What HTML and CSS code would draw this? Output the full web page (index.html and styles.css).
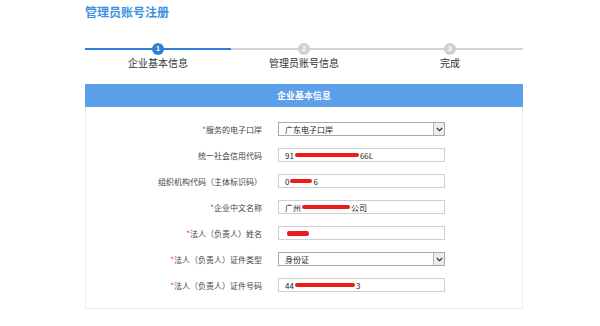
FILE: index.html
```html
<!DOCTYPE html>
<html lang="zh-CN">
<head>
  <meta charset="UTF-8" />
  <title>管理员账号注册</title>
  <link rel="stylesheet" href="styles.css">
</head>
<body>
  <div class="page">
    <h1 class="page-title">管理员账号注册</h1>

    <div class="steps">
      <div class="step active">
        <div class="step-bar"><span class="step-num">1</span></div>
        <div class="step-label">企业基本信息</div>
      </div>
      <div class="step">
        <div class="step-bar"><span class="step-num">2</span></div>
        <div class="step-label">管理员账号信息</div>
      </div>
      <div class="step">
        <div class="step-bar"><span class="step-num">3</span></div>
        <div class="step-label">完成</div>
      </div>
    </div>

    <div class="panel">
      <div class="panel-head">企业基本信息</div>
      <div class="panel-body">
        <div class="row">
          <label class="row-label"><i>*</i>服务的电子口岸</label>
          <div class="field select">广东电子口岸<span class="arrow"><svg width="7" height="5" viewBox="0 0 7 5"><path d="M0.8 1 L3.5 3.7 L6.2 1" fill="none" stroke="#333" stroke-width="1.2"/></svg></span></div>
        </div>
        <div class="row">
          <label class="row-label">统一社会信用代码</label>
          <div class="field">91<span class="mask" style="width:64px"></span>66L</div>
        </div>
        <div class="row">
          <label class="row-label">组织机构代码（主体标识码）</label>
          <div class="field">0<span class="mask" style="width:22px"></span>6</div>
        </div>
        <div class="row">
          <label class="row-label"><i>*</i>企业中文名称</label>
          <div class="field">广州<span class="mask" style="width:48px"></span>公司</div>
        </div>
        <div class="row">
          <label class="row-label"><i>*</i>法人（负责人）姓名</label>
          <div class="field"><span class="mask first" style="width:22px"></span></div>
        </div>
        <div class="row">
          <label class="row-label"><i>*</i>法人（负责人）证件类型</label>
          <div class="field select">身份证<span class="arrow"><svg width="7" height="5" viewBox="0 0 7 5"><path d="M0.8 1 L3.5 3.7 L6.2 1" fill="none" stroke="#333" stroke-width="1.2"/></svg></span></div>
        </div>
        <div class="row">
          <label class="row-label"><i>*</i>法人（负责人）证件号码</label>
          <div class="field">44<span class="mask" style="width:60px"></span>3</div>
        </div>
      </div>
    </div>
  </div>
</body>
</html>
```

FILE: styles.css
```css
body {
  margin: 0;
  background: #fff;
  font-family: "Noto Sans CJK SC", "Liberation Sans", sans-serif;
  color: #333;
}

.page {
  width: 438px;
  margin-left: 85px;
  padding-top: 3px;
}

.page-title {
  margin: 0;
  font-size: 12px;
  line-height: 17px;
  font-weight: bold;
  color: #3c8fe2;
}

/* Steps */
.steps {
  display: flex;
  margin-top: 23px;
}

.step {
  flex: 1;
}

.step-bar {
  position: relative;
  height: 2px;
  margin-top: 5px;
  background: #d4d4d4;
}

.step.active .step-bar {
  background: #2f80d6;
}

.step-num {
  position: absolute;
  left: 50%;
  top: -5px;
  width: 12px;
  height: 12px;
  margin-left: -6px;
  border-radius: 50%;
  background: #d0d0d0;
  color: #fff;
  font-size: 7px;
  font-weight: bold;
  line-height: 12px;
  text-align: center;
  font-family: "Liberation Sans", sans-serif;
}

.step.active .step-num {
  background: #2f80d6;
}

.step-label {
  margin-top: 6px;
  text-align: center;
  font-size: 10px;
  line-height: 14px;
  color: #333;
}

/* Panel */
.panel {
  margin-top: 14px;
}

.panel-head {
  height: 23px;
  line-height: 23px;
  background: #5ba0e8;
  color: #fff;
  font-size: 9px;
  font-weight: bold;
  text-align: center;
}

.panel-body {
  border: 1px solid #ececec;
  border-top: none;
  padding: 15px 0 16px;
  display: flex;
  flex-direction: column;
  gap: 12px;
}

.row {
  display: flex;
  align-items: center;
  height: 14px;
}

.row-label {
  width: 176px;
  padding-right: 16px;
  text-align: right;
  font-size: 8px;
  color: #444;
  white-space: nowrap;
}

.row-label i {
  font-style: normal;
  color: #e23a3a;
}

.field {
  position: relative;
  display: flex;
  align-items: center;
  box-sizing: border-box;
  width: 167px;
  height: 14px;
  padding-left: 6px;
  border: 1px solid #cfcfcf;
  font-size: 8px;
  color: #222;
}

.field.select {
  border-color: #a9a9a9;
}

.arrow {
  position: absolute;
  right: 0;
  top: 0;
  bottom: 0;
  width: 10px;
  display: flex;
  align-items: center;
  justify-content: center;
  background: #ececec;
  border-left: 1px solid #b5b5b5;
}

.mask {
  display: inline-block;
  height: 4px;
  margin: 0 1px;
  border-radius: 2px;
  background: #ee1b1b;
}

.mask.first {
  margin-left: 2px;
  height: 5px;
}
```
